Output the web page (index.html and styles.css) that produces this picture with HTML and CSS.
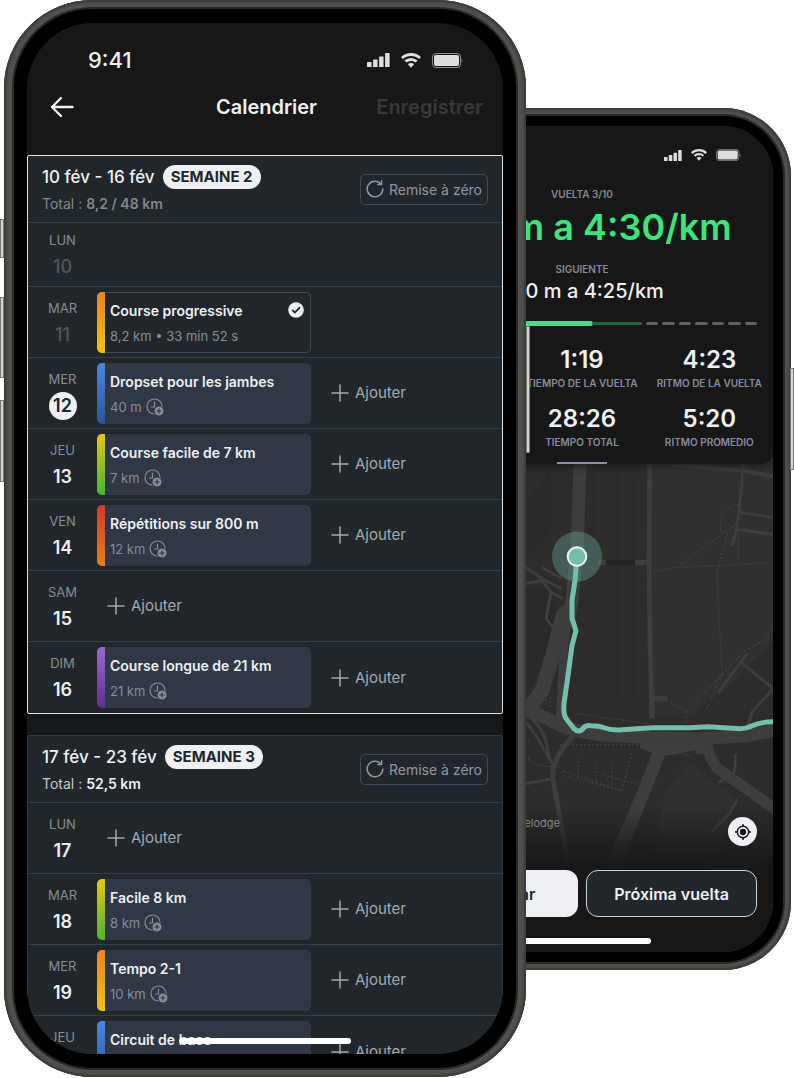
FILE: index.html
```html
<!DOCTYPE html>
<html lang="fr">
<head>
<meta charset="utf-8">
<meta name="viewport" content="width=device-width, initial-scale=1">
<title>Calendrier</title>
<link rel="stylesheet" href="styles.css">
</head>
<body>
<svg class="sprite" aria-hidden="true">
  <symbol id="signal" viewBox="0 0 23 14"><path d="M1 9h3a.6.6 0 0 1 .6.6V13.4a.6.6 0 0 1-.6.6H.6a.6.6 0 0 1-.6-.6V9.600A.6.6 0 0 1 .6 9zM6.700 6.500h3.300a.6.6 0 0 1 .6.6V14H6.100V7.100a.6.6 0 0 1 .6-.6zM12.700 3.500H16a.6.6 0 0 1 .6.6V14h-4.500V4.100a.6.6 0 0 1 .6-.6zM18.700 0H22a.6.6 0 0 1 .6.6V14h-4.500V.6a.6.6 0 0 1 .6-.6z"/></symbol>
  <symbol id="wifi" viewBox="0 0 20 15"><path d="M10 0C6.200 0 2.700 1.500 0 4l1.900 2.100A12 12 0 0 1 10 2.900a12 12 0 0 1 8.100 3.200L20 4C17.300 1.500 13.800 0 10 0zM10 5c-2.500 0-4.700.9-6.500 2.500l1.900 2.100A7 7 0 0 1 10 7.900c1.800 0 3.400.6 4.600 1.700l1.900-2.100A9.800 9.800 0 0 0 10 5zM10 10c-1.200 0-2.300.4-3.100 1.200L10 14.800l3.100-3.600A4.500 4.500 0 0 0 10 10z"/></symbol>
  <symbol id="battery" viewBox="0 0 31 15"><rect x=".5" y=".5" width="28" height="14" rx="3.500" fill="none" stroke="#8b8c8c"/><rect x="2" y="2" width="25" height="11" rx="2"/><path d="M29.500 5.500c1.200.3 1.200 3.700 0 4z" fill="#8b8c8c"/></symbol>
  <symbol id="plus" viewBox="0 0 18 18"><path d="M9 1v16M1 9h16" fill="none" stroke="currentColor" stroke-width="1.500" stroke-linecap="round"/></symbol>
  <symbol id="clock" viewBox="0 0 18 18"><circle cx="8.500" cy="8.500" r="7.500" fill="none" stroke="currentColor" stroke-width="1.200"/><path d="M8.500 4v5H5.500" fill="none" stroke="currentColor" stroke-width="1.200" stroke-linecap="round"/><circle cx="13" cy="13" r="5" fill="currentColor" stroke="#2f3844" stroke-width="1"/><path d="M13 10.500v5M10.500 13h5" stroke="#2f3844" stroke-width="1.200"/></symbol>
  <symbol id="reset" viewBox="0 0 18 18"><path d="M16.800 9A7.800 7.800 0 1 1 15 4M15.600 .8V4.600H11.800" fill="none" stroke="currentColor" stroke-width="1.500" stroke-linecap="round" stroke-linejoin="round"/></symbol>
</svg>

<div class="stage">
  <section class="phone phone-front" aria-label="Calendrier">
    <i class="key key-mute"></i><i class="key key-up"></i><i class="key key-down"></i><i class="key key-power"></i>
    <div class="bezel">
      <div class="screen">
        <div class="status">
          <span class="time">9:41</span>
          <span class="status-icons">
            <svg width="23" height="14"><use href="#signal"/></svg>
            <svg width="20" height="15"><use href="#wifi"/></svg>
            <svg width="31" height="15"><use href="#battery"/></svg>
          </span>
        </div>
        <header class="topbar">
          <button class="back" aria-label="Retour"><svg width="24" height="22" viewBox="0 0 24 22"><path d="M22.500 11H2M11 2l-9 9 9 9" fill="none" stroke="currentColor" stroke-width="2.400" stroke-linecap="round" stroke-linejoin="round"/></svg></button>
          <h1>Calendrier</h1>
          <button class="save" disabled>Enregistrer</button>
        </header>
        <main class="weeks">
          <section class="week current">
            <div class="week-head">
              <div class="week-info">
                <h2>10 fév - 16 fév <span class="pill">SEMAINE 2</span></h2>
                <p class="total">Total : <b>8,2 / 48 km</b></p>
              </div>
              <button class="reset"><svg width="18" height="18"><use href="#reset"/></svg>Remise à zéro</button>
            </div>
            <div class="day past short"><div class="date"><span>LUN</span><b>10</b></div></div>
            <div class="day past"><div class="date"><span>MAR</span><b>11</b></div>
              <article class="card done orange"><h3>Course progressive</h3><p>8,2 km • 33 min 52 s</p>
                <svg class="check" width="16" height="16" viewBox="0 0 16 16"><circle cx="8" cy="8" r="7.800" fill="#eef0f3"/><path d="M4.600 8.300l2.300 2.300 4.600-4.900" fill="none" stroke="#20262a" stroke-width="1.700" stroke-linecap="round" stroke-linejoin="round"/></svg>
              </article></div>
            <div class="day today"><div class="date"><span>MER</span><b>12</b></div>
              <article class="card blue"><h3>Dropset pour les jambes</h3><p>40 m <svg width="18" height="18"><use href="#clock"/></svg></p></article>
              <button class="add"><svg width="18" height="18"><use href="#plus"/></svg>Ajouter</button></div>
            <div class="day"><div class="date"><span>JEU</span><b>13</b></div>
              <article class="card green"><h3>Course facile de 7 km</h3><p>7 km <svg width="18" height="18"><use href="#clock"/></svg></p></article>
              <button class="add"><svg width="18" height="18"><use href="#plus"/></svg>Ajouter</button></div>
            <div class="day"><div class="date"><span>VEN</span><b>14</b></div>
              <article class="card red"><h3>Répétitions sur 800 m</h3><p>12 km <svg width="18" height="18"><use href="#clock"/></svg></p></article>
              <button class="add"><svg width="18" height="18"><use href="#plus"/></svg>Ajouter</button></div>
            <div class="day"><div class="date"><span>SAM</span><b>15</b></div>
              <button class="add lone"><svg width="18" height="18"><use href="#plus"/></svg>Ajouter</button></div>
            <div class="day"><div class="date"><span>DIM</span><b>16</b></div>
              <article class="card purple"><h3>Course longue de 21 km</h3><p>21 km <svg width="18" height="18"><use href="#clock"/></svg></p></article>
              <button class="add"><svg width="18" height="18"><use href="#plus"/></svg>Ajouter</button></div>
          </section>
          <section class="week">
            <div class="week-head">
              <div class="week-info">
                <h2>17 fév - 23 fév <span class="pill">SEMAINE 3</span></h2>
                <p class="total upcoming">Total : <b>52,5 km</b></p>
              </div>
              <button class="reset"><svg width="18" height="18"><use href="#reset"/></svg>Remise à zéro</button>
            </div>
            <div class="day"><div class="date"><span>LUN</span><b>17</b></div>
              <button class="add lone"><svg width="18" height="18"><use href="#plus"/></svg>Ajouter</button></div>
            <div class="day"><div class="date"><span>MAR</span><b>18</b></div>
              <article class="card green"><h3>Facile 8 km</h3><p>8 km <svg width="18" height="18"><use href="#clock"/></svg></p></article>
              <button class="add"><svg width="18" height="18"><use href="#plus"/></svg>Ajouter</button></div>
            <div class="day"><div class="date"><span>MER</span><b>19</b></div>
              <article class="card orange"><h3>Tempo 2-1</h3><p>10 km <svg width="18" height="18"><use href="#clock"/></svg></p></article>
              <button class="add"><svg width="18" height="18"><use href="#plus"/></svg>Ajouter</button></div>
            <div class="day"><div class="date"><span>JEU</span></div>
              <article class="card blue"><h3>Circuit de base</h3></article>
              <button class="add"><svg width="18" height="18"><use href="#plus"/></svg>Ajouter</button></div>
          </section>
        </main>
        <i class="home"></i>
      </div>
    </div>
  </section>

  <section class="phone phone-back" lang="es" aria-label="Vuelta">
    <i class="key key-side"></i>
    <div class="bezel">
      <div class="screen run">
        <svg class="map" viewBox="391 126 382 825" preserveAspectRatio="xMidYMid slice" aria-hidden="true">
          <defs><linearGradient id="fade" x1="0" y1="0" x2="0" y2="1"><stop offset="0" stop-color="#171717" stop-opacity="0"/><stop offset="1" stop-color="#171717"/></linearGradient></defs>
          <rect x="391" y="126" width="382" height="825" fill="#2d2c2b"/>
          <path d="M652 440H773V640L724 690 690 714H653zM690 760L665 790 655 850H720L735 800z" fill="#2e312e"/>
          <path d="M526 590h20l12 20-20 70-12 10zM526 500l25-30v60l-25 30z" fill="#2b2928"/>
          <g fill="none" stroke="#3e3d3d" stroke-linejoin="round">
            <path d="M581 440L577 550 572 600 568 625" stroke-width="13"/>
            <path d="M564 612L554 650 542 690 526 712" stroke-width="15"/>
            <path d="M567 620L563 660 560 718" stroke-width="8"/>
            <path d="M558 612Q566 600 574 612V625H558z" stroke-width="4" fill="#3e3d3d"/>
            <path d="M520 706L545 717 568 728 600 734 650 737 700 738 745 735 780 729" stroke-width="13"/>
            <path d="M650 440L649 560 650 640 652 718" stroke-width="5"/>
            <path d="M648 738Q662 742 658 755L640 800 612 866" stroke-width="13"/>
            <path d="M642 742Q662 752 676 748T706 742Q710 760 718 768L780 812" stroke-width="11"/>
            <path d="M697 748Q708 752 704 738" stroke-width="9"/>
            <path d="M574 734Q550 760 553 778L568 862" stroke-width="5"/>
            <path d="M526 721L538 738 546 752 553 764M526 714Q540 722 546 740L550 760" stroke-width="3"/>
            <path d="M526 783L552 778" stroke-width="3"/>
            <path d="M526 567L545 580 562 588M526 583L542 580 551 592 563 598M542 567L562 578M551 592L546 618 554 628" stroke-width="3"/>
            <path d="M598 562H646" stroke-width="5"/><path d="M606 562H635" stroke="#242424" stroke-width="5"/>
            <path d="M652 698H667" stroke-width="5"/>
            <path d="M672 464L742 470 773 476" stroke-width="4"/>
            <path d="M743 464L741 490 737 526 732 546" stroke-width="3"/>
            <path d="M740 512L773 517M738 529L773 534" stroke-width="3"/>
            <path d="M718 692L747 653M741 662L773 688M773 688L752 711 748 724" stroke-width="3"/>
            <path d="M735 753Q736 770 732 774L718 782M737 799L729 813 711 831" stroke-width="3"/>
            <path d="M706 864H755L773 850" stroke-width="3"/>
          </g>
          <g fill="none" stroke="#444641" stroke-width="1" stroke-dasharray="2 2">
            <path d="M653 571L676 567 773 562M676 567L725 531 737 523M737 504Q716 510 721 531L728 532 717 570 718 600 722 674M722 674L745 650 765 639 773 626M722 674L686 711 667 699M722 674L706 709M686 711V722M738 529V562"/>
            <path d="M575 713L650 723M560 744H640L650 749M562 770L622 790 632 750M578 756V777M596 762V782M612 762V788M564 775L620 789M604 774L638 784M658 745L702 746M660 757Q676 747 692 757M655 770L625 860M528 757Q532 766 560 766M546 690V704M550 680V706"/>
          </g>
          <path d="M617 470V700M633 475V700M593 470V550M600 600V700" stroke="#292828" fill="none"/>
          <rect x="391" y="805" width="382" height="62" fill="url(#fade)"/>
          <rect x="391" y="866" width="382" height="90" fill="#171717"/>
          <text x="560" y="826" text-anchor="end" class="place">Travelodge</text>
          <circle cx="577" cy="556" r="25" fill="#6fb8a9" fill-opacity=".35"/>
          <path d="M577 556L575 580 572 600 572 618 576 630 572 645 568 675 564 703Q563 715 567 719L574 728Q578 732 582 729 585 724 591 725 599 725 604 727 612 730 622 729L652 727H690L708 726 740 728Q746 728 752 725 760 721 776 721" fill="none" stroke="#74beae" stroke-width="5" stroke-linejoin="round"/>
          <circle cx="577" cy="556" r="9.300" fill="#74beae" stroke="#f2f4f4" stroke-width="2"/>
        </svg>
        <div class="panel">
          <div class="status small">
            <span class="status-icons">
              <svg width="18" height="11"><use href="#signal"/></svg>
              <svg width="16" height="12"><use href="#wifi"/></svg>
              <svg width="25" height="12"><use href="#battery"/></svg>
            </span>
          </div>
          <p class="caption">VUELTA 3/10</p>
          <p class="pace">800 m a 4:30/km</p>
          <p class="caption next">SIGUIENTE</p>
          <p class="pace-next">800 m a 4:25/km</p>
          <div class="progress"><i class="done-part"></i><i class="lap-part"></i><i></i><i></i><i></i><i></i><i></i><i></i><i></i></div>
          <dl class="stats">
            <div class="first"><dd>1:19</dd><dt>TIEMPO DE LA VUELTA</dt></div>
            <div><dd>4:23</dd><dt>RITMO DE LA VUELTA</dt></div>
            <div class="first"><dd>28:26</dd><dt>TIEMPO TOTAL</dt></div>
            <div><dd>5:20</dd><dt>RITMO PROMEDIO</dt></div>
          </dl>
          <i class="grip"></i>
        </div>
        <div class="controls">
          <button class="locate" aria-label="Centrar mapa"><svg width="18" height="18" viewBox="0 0 18 18" fill="none" stroke="#171717" stroke-width="1.500"><circle cx="9" cy="9" r="5.700"/><circle cx="9" cy="9" r="2.400" fill="#171717"/><path d="M9 1v2.500M9 14.500V17M1 9h2.500M14.500 9H17"/></svg></button>
          <div class="actions">
            <button class="action light">Abandonar</button>
            <button class="action dark">Próxima vuelta</button>
          </div>
        </div>
        <i class="home"></i>
      </div>
    </div>
  </section>
</div>
</body>
</html>
```
FILE: styles.css
```css
* { box-sizing: border-box; margin: 0; }
body { background: #fff; font-family: Inter, "Liberation Sans", sans-serif; color: #eef0f3; }
button { font: inherit; color: inherit; background: none; border: 0; padding: 0; cursor: pointer; }
svg { display: block; flex: none; }
.sprite { position: absolute; width: 0; height: 0; }

/* Two overlapping phones share the middle grid track */
.stage {
  display: grid;
  grid-template-columns: 4px minmax(0, 369fr) minmax(0, 153fr) minmax(0, 265fr) 3px;
  align-items: start;
  overflow: hidden;
}
.phone {
  position: relative;
  grid-row: 1;
  background: #51524e;
  box-shadow: inset 0 0 0 2px #3b3e39, inset 0 0 3px 3px #454642;
}
.phone-front { grid-column: 2 / 4; z-index: 1; aspect-ratio: 522 / 1077; border-radius: 88px; padding: 9px 10px; }
.phone-back { grid-column: 3 / 5; aspect-ratio: 418 / 862; margin-top: 108px; border-radius: 68px; padding: 8px; }
.bezel { height: 100%; background: #000; box-shadow: 0 0 0 2px #292a28; }
.phone-front .bezel { border-radius: 78px; padding: 14px 13px; }
.phone-back .bezel { border-radius: 60px; padding: 10px; }
.screen { position: relative; height: 100%; overflow: hidden; background: #171717; display: flex; flex-direction: column; }
.phone-front .screen { border-radius: 66px; }
.phone-back .screen { border-radius: 50px; }

.key { position: absolute; width: 4px; background: #d5d4d6; border: 1px solid #77777a; }
.key-mute { left: -4px; top: 219px; height: 39px; }
.key-up { left: -4px; top: 297px; height: 81px; }
.key-down { left: -4px; top: 400px; height: 82px; }
.key-power { right: -4px; top: 326px; height: 127px; }
.key-side { right: -3px; top: 260px; height: 102px; }

.home { position: absolute; left: 32%; right: 32%; bottom: 10px; height: 6px; border-radius: 3px; background: #fff; }

/* Status bar and title */
.status { display: flex; justify-content: space-between; align-items: center; height: 30px; margin-top: 22px; padding: 0 40px 0 61px; }
.time { font-size: 22px; font-weight: 500; }
.status-icons { display: flex; align-items: center; gap: 11px; fill: #dcdedf; }
.topbar { display: grid; grid-template-columns: 1fr auto 1fr; align-items: center; height: 30px; margin: 17px 20px 33px 23px; }
.back { justify-self: start; }
.topbar h1 { font-size: 20px; line-height: 30px; font-weight: 600; }
.save { justify-self: end; font-size: 20px; font-weight: 600; color: #383838; }

/* Weeks */
.weeks { flex: 1; min-height: 0; overflow: hidden; display: flex; flex-direction: column; gap: 21px; background: #151819; }
.week { flex: none; background: #20262a; border: 1px solid #303a42; border-radius: 2px; }
.week.current { border-color: #dfe1e4; }
.week-head { display: flex; justify-content: space-between; align-items: center; height: 67px; padding: 0 14px; border-bottom: 1px solid #343e48; }
.week-info { display: flex; flex-direction: column; gap: 5px; }
.week h2 { display: flex; align-items: center; gap: 8px; font-size: 17px; line-height: 24px; font-weight: 500; }
.pill { padding: 0 8px; border-radius: 12px; background: #eef0f3; color: #20262a; font-size: 15px; line-height: 24px; font-weight: 700; }
.total { font-size: 14px; line-height: 20px; color: #7f8890; }
.total b { font-weight: 600; }
.total.upcoming { color: #c5cad0; }
.total.upcoming b { color: #eef0f3; }
.reset { display: flex; align-items: center; gap: 5px; height: 31px; padding: 0 5px; border: 1px solid #3a4b5e; border-radius: 5px; color: #8f979f; font-size: 14px; }

.day { display: grid; grid-template-columns: 69px minmax(0, 214fr) minmax(0, 191fr); align-items: center; height: 71px; border-bottom: 1px solid #343e48; }
.day:last-child { border-bottom: 0; }
.day.short { height: 64px; }
.date { align-self: start; display: flex; flex-direction: column; align-items: center; gap: 5px; padding-top: 13px; }
.short .date { padding-top: 9px; }
.date span { font-size: 13px; line-height: 16px; color: #858d94; }
.date b { width: 28px; font-size: 18px; line-height: 28px; font-weight: 600; text-align: center; border-radius: 50%; }
.past .date b { color: #50575c; font-weight: 500; }
.today .date b { background: #eef0f3; color: #20262a; }

.card { position: relative; align-self: start; height: 61px; margin-top: 5px; padding: 9px 12px 7px 13px; border-radius: 5px; background: #2f3844; overflow: hidden; }
.card::before { content: ""; position: absolute; inset: 0 auto 0 0; width: 8px; background: var(--zone); }
.card h3 { font-size: 14px; line-height: 20px; font-weight: 600; white-space: nowrap; }
.card p { display: flex; align-items: center; gap: 4px; margin-top: 5px; font-size: 13px; line-height: 20px; color: #868d97; white-space: nowrap; }
.card.done { background: none; box-shadow: inset 0 0 0 1px #3c4a5c; }
.check { position: absolute; top: 10px; right: 7px; }
.orange { --zone: linear-gradient(#e8861f, #ecc314); }
.blue { --zone: linear-gradient(#4c86e0, #2c5596); }
.green { --zone: linear-gradient(#e6c713, #48b82c); }
.red { --zone: linear-gradient(#d8372c, #e08020); }
.purple { --zone: linear-gradient(#9b69cf, #5b308f); }
.add { display: flex; align-items: center; gap: 6px; padding-left: 20px; font-size: 15px; line-height: 20px; color: #a2a9af; }
.add.lone { padding-left: 10px; }

/* Run screen */
.map { position: absolute; inset: 0; width: 100%; height: 100%; }
.place { font-size: 11px; fill: #858585; }
.panel { position: relative; height: 338px; background: #171717; border-radius: 0 0 12px 12px; box-shadow: 0 1px 8px #171717; text-align: center; }
.status.small { justify-content: flex-end; margin: 0; padding: 14px 32px 0; height: 44px; }
.small .status-icons { gap: 9px; }
.caption { margin-top: 16px; font-size: 10px; line-height: 16px; font-weight: 600; color: #858994; }
.pace { margin-top: 1px; font-size: 36px; line-height: 48px; font-weight: 600; color: #3ae67b; }
.caption.next { margin-top: 10px; }
.pace-next { margin-top: 2px; font-size: 20px; line-height: 24px; font-weight: 500; }
.progress { display: flex; align-items: center; gap: 4px; height: 6px; margin: 17px 16px 0; }
.progress i { flex: 1; height: 3px; border-radius: 2px; background: #606161; }
.progress .done-part { flex: 15 0 0; height: 5px; background: #3ae67b; }
.progress .lap-part { flex: 4 0 0; margin-left: -5px; background: #24633c; }
.stats { display: grid; grid-template-columns: repeat(3, 1fr); row-gap: 12px; margin-top: 18px; }
.stats div { display: flex; flex-direction: column; align-items: center; }
.stats .first { grid-column: 2; }
.stats dd { margin: 0; font-size: 24px; line-height: 32px; font-weight: 600; }
.stats dt { font-size: 10px; line-height: 15px; font-weight: 600; color: #858d9f; white-space: nowrap; }
.grip { position: absolute; bottom: 0; left: 50%; width: 50px; height: 2px; margin-left: -25px; background: #8292a8; }
.controls { position: relative; margin-top: auto; padding: 0 16px 35px; display: flex; flex-direction: column; align-items: flex-end; gap: 24px; }
.locate { display: grid; place-items: center; width: 29px; height: 29px; border-radius: 50%; background: #eef0f3; }
.actions { align-self: stretch; display: grid; grid-template-columns: 1fr 1fr; gap: 8px; }
.action { height: 47px; border-radius: 12px; font-size: 16px; font-weight: 600; white-space: nowrap; }
.action.light { background: #eef0f3; color: #20262a; }
.action.dark { background: #20262a; border: 1px solid #cfd2d5; }
.phone-back .home { bottom: 8px; }
```
